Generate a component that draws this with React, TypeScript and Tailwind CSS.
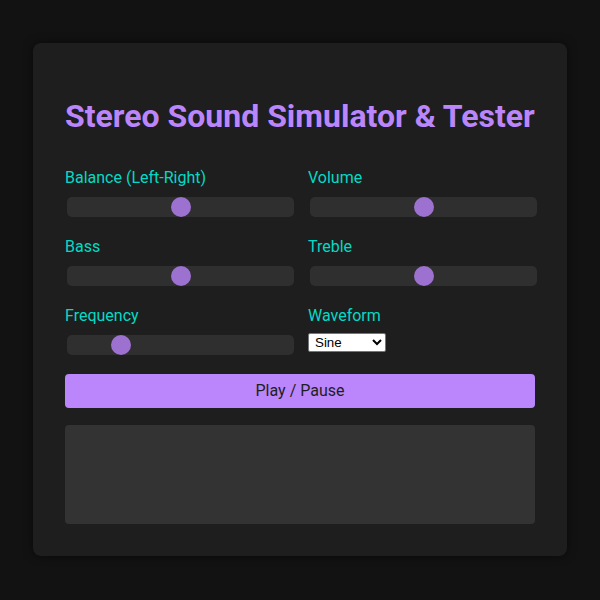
import React from "react";

function Slider({ value, min = 0, max = 100 }: { value: number; min?: number; max?: number }) {
  const pct = (value - min) / (max - min);
  return (
    <div className="relative my-[2px] ml-[2px] h-5 w-full rounded-[5px] bg-[#2f2f2f]">
      <div
        className="absolute top-0 h-5 w-5 rounded-full bg-[#9c71d0]"
        style={{ left: `calc(${pct} * (100% - 20px))` }}
      />
    </div>
  );
}

function Group({ label, children }: { label: string; children: React.ReactNode }) {
  return (
    <div className="flex flex-col">
      <label className="mb-2 block text-[16px] leading-[19px] text-[#03dac6]">{label}</label>
      {children}
    </div>
  );
}

export default function App() {
  return (
    <div
      className="min-h-[600px] w-full bg-[#121212] px-[33px] pt-[43px]"
      style={{ fontFamily: "Roboto, 'Noto Sans', sans-serif" }}
    >
      <div className="rounded-lg bg-[#1e1e1e] p-8 shadow-[0_0_10px_rgba(0,0,0,0.5)]">
        <h1 className="mb-[21px] mt-[22px] text-[32px] font-bold leading-[39px] text-[#bb86fc]">
          Stereo Sound Simulator &amp; Tester
        </h1>
        <div className="mt-[32px] grid grid-cols-2 gap-x-4 gap-y-[18px]">
          <Group label="Balance (Left-Right)">
            <Slider value={0} min={-1} max={1} />
          </Group>
          <Group label="Volume">
            <Slider value={50} />
          </Group>
          <Group label="Bass">
            <Slider value={0} min={-10} max={10} />
          </Group>
          <Group label="Treble">
            <Slider value={0} min={-10} max={10} />
          </Group>
          <Group label="Frequency">
            <Slider value={440} min={20} max={2000} />
          </Group>
          <Group label="Waveform">
            <select
              className="h-[19px] w-[78px] rounded-[2px] border border-[#767676] bg-white pl-[2px] text-[13.33px] leading-[15px] text-black"
              style={{ fontFamily: "'Liberation Sans', Arial, sans-serif", appearance: "auto" }}
              defaultValue="sine"
            >
              <option value="sine">Sine</option>
              <option value="square">Square</option>
              <option value="sawtooth">Sawtooth</option>
              <option value="triangle">Triangle</option>
            </select>
          </Group>
        </div>
        <button className="mt-[17px] block h-[34px] w-full rounded-[4px] bg-[#bb86fc] text-[16px] text-[#1e1e1e]">
          Play / Pause
        </button>
        <div className="mt-[17px] h-[99px] rounded-[4px] bg-[#333333]" />
      </div>
    </div>
  );
}
